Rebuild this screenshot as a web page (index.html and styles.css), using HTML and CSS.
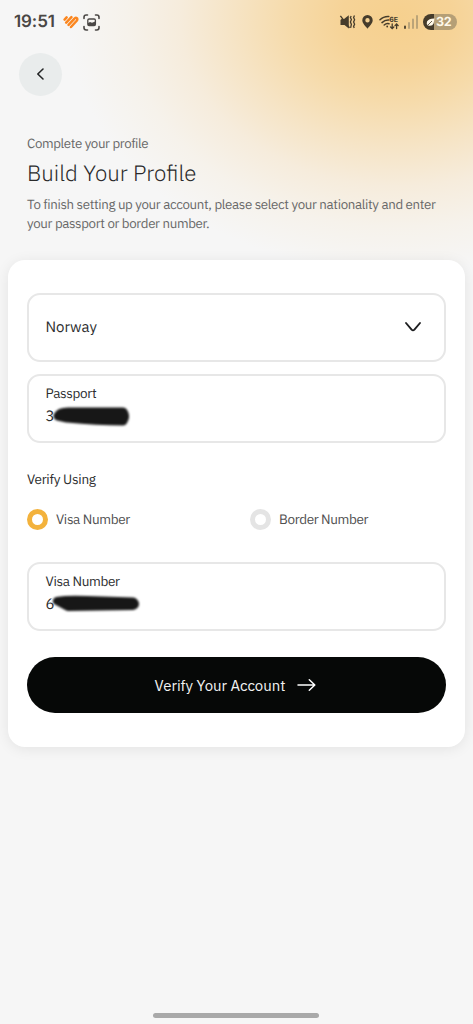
FILE: index.html
```html
<!DOCTYPE html>
<html lang="en">
<head>
<meta charset="utf-8">
<meta name="viewport" content="width=device-width, initial-scale=1">
<title>Build Your Profile</title>
<link rel="stylesheet" href="styles.css">
</head>
<body>
<div class="screen">
  <header class="status">
    <div class="status-left">
      <span class="clock">19:51</span>
      <svg class="heart" width="16" height="14" viewBox="0 0 16 14" fill="none" stroke="#fb861f" stroke-width="2.5" stroke-linecap="round">
        <path d="M1.6 4.6 3.6 2.4M3.2 7.6 8.4 2.2M5.6 9.9 11 4.2C12.7 1.4 15.6 3.4 13.7 5.8L8 12"/>
      </svg>
      <svg class="capture" width="17" height="17" viewBox="0 0 17 17" fill="none" stroke="#4a4745" stroke-width="1.6" stroke-linecap="round">
        <path d="M1 4.5V3.2Q1 1 3.2 1H4.5M12.5 1H13.8Q16 1 16 3.2V4.5M16 12.5V13.8Q16 16 13.8 16H12.5M4.5 16H3.2Q1 16 1 13.8V12.5"/>
        <rect x="4.8" y="5" width="7.6" height="6.6" rx="1.3" stroke-width="1.3"/>
        <path d="M5 9 7 8 9 8.8 12.2 7.6V11.5H5Z" fill="#4a4745" stroke="none"/>
      </svg>
    </div>
    <div class="status-right">
      <svg width="17" height="16" viewBox="0 0 17 16" fill="#463c2b">
        <path d="M2.5 5H5L9.8 1.2V14.5L5.5 11H1.5V6Z"/>
        <path d="M1.4 1.8 10.5 13.8" stroke="#463c2b" stroke-width="1.4"/>
        <path d="M12.2 2 11.4 3.5 12.4 5.5 11.4 8 12.4 10.4 11.6 13.8M15.5 1.5 14.6 3.5 15.6 5.7 14.6 8 15.6 10.3 14.6 12.4 15.2 14" fill="none" stroke="#463c2b" stroke-width="1.3"/>
      </svg>
      <svg class="pin" width="11" height="14" viewBox="0 0 11 14" fill="#463c2b">
        <path fill-rule="evenodd" d="M5.5 0A5.2 5.2 0 0 0 .3 5.2C.3 8.7 4 11.3 5.5 13.7 7 11.3 10.7 8.7 10.7 5.2A5.2 5.2 0 0 0 5.5 0ZM5.5 3A2.2 2.2 0 1 1 5.5 7.4 2.2 2.2 0 0 1 5.5 3Z"/>
      </svg>
      <svg class="wifi" width="21" height="15" viewBox="0 0 21 15" fill="none" stroke="#463c2b" stroke-width="1.5" stroke-linecap="round">
        <path d="M1 4.8Q4.5 1.2 9.8 1.5M3 7.6Q6 4.7 9.8 5M5.2 10Q7.4 8 10 8.7"/>
        <circle cx="8.2" cy="11.5" r=".9" fill="#463c2b" stroke="none"/>
        <path d="M13.2 9V13.3M11.6 12 13.2 13.6 14.8 12M17.6 13.5V9.2M16 10.6 17.6 9 19.2 10.6" stroke-width="1.3"/>
        <text class="wifi-text" x="10.3" y="6.7">6E</text>
      </svg>
      <svg class="signal" width="14" height="14" viewBox="0 0 14 14" stroke="#b59f76" stroke-width="1.8" stroke-linecap="round">
        <path d="M1 11.5V13" stroke="#463c2b"/>
        <path d="M5 8V13M9 4.5V13M13 1V13"/>
      </svg>
      <div class="battery">
        <svg width="9" height="9" viewBox="0 0 9 9" fill="#fff8e8"><path d="M8.5 .5Q3 .3 1 3.5 0 6 2 7.6 6.5 8.7 7.7 5.2ZM0 8.6 2.7 6.3"/><path d="M2 7 6 3" stroke="#463c2b" stroke-width=".8"/></svg>
        <span>32</span>
      </div>
    </div>
  </header>

  <button class="back" aria-label="Back">
    <svg width="9" height="14" viewBox="0 0 9 14" fill="none" stroke="#242526" stroke-width="1.6" stroke-linecap="round" stroke-linejoin="round"><path d="M7 2 1.8 7 7 12"/></svg>
  </button>

  <section class="intro">
    <p class="eyebrow">Complete your profile</p>
    <h1>Build Your Profile</h1>
    <p class="lead"><span>To finish setting up your account, please select your nationality and enter</span><br><span>your passport or border number.</span></p>
  </section>

  <main class="card">
    <div class="field select">
      <span class="country">Norway</span>
      <svg width="18" height="12" viewBox="0 0 18 12" fill="none" stroke="#1d1e20" stroke-width="1.9" stroke-linecap="round" stroke-linejoin="round"><path d="M2 2 7.6 8.6Q9 10 10.4 8.6L16 2"/></svg>
    </div>
    <div class="field passport">
      <span class="label">Passport</span>
      <div class="value"><span>3</span>
        <svg class="mask" width="92" height="30" viewBox="0 0 92 30"><path d="M16 15 Q18 11 26 11L81 11Q84 15 81 20Q55 20 25 17Z" fill="#171717" stroke="#171717" stroke-width="9" stroke-linejoin="round"/></svg>
      </div>
    </div>
    <h2>Verify Using</h2>
    <div class="options">
      <div class="option"><span class="radio on"></span><span>Visa Number</span></div>
      <div class="option"><span class="radio"></span><span>Border Number</span></div>
    </div>
    <div class="field visa">
      <span class="label">Visa Number</span>
      <div class="value"><span>6</span>
        <svg class="mask" width="104" height="30" viewBox="0 0 104 30"><path d="M15 12 Q26 10 45 11L91 12.5Q95 15 91 17L26 18Z" fill="#171717" stroke="#171717" stroke-width="8" stroke-linejoin="round"/></svg>
      </div>
    </div>
    <button class="submit">
      <span>Verify Your Account</span>
      <svg width="19" height="14" viewBox="0 0 19 14" fill="none" stroke="#fff" stroke-width="1.5" stroke-linecap="round" stroke-linejoin="round"><path d="M1 7H17.5M12.3 1.8 17.8 7 12.3 12.2"/></svg>
    </button>
  </main>
  <div class="home"></div>
</div>
</body>
</html>
```

FILE: styles.css
```css
* { box-sizing: border-box; }
body {
  margin: 0;
  font-family: "IBM Plex Sans", Roboto, "Noto Sans", sans-serif;
  text-rendering: geometricPrecision;
  color: #2d2e2f;
  background: #f6f6f6;
}
h1, h2, p { margin: 0; font-weight: 400; }
button { border: 0; padding: 0; font: inherit; }
svg { display: block; flex: none; }
span { white-space: nowrap; }

.screen {
  height: 1024px;
  display: flex;
  flex-direction: column;
  overflow: hidden;
  background:
    radial-gradient(ellipse 330px 255px at 398px 18px,
      #f6d08e 0%, #f6d397 17%, #f6dbab 33%, #f6e4c5 50%, #f6ecdc 66%, #f6f2eb 82%, #f6f6f6 100%),
    #f6f6f6;
}

.status {
  height: 44px;
  padding: 0 16px 0 14px;
  display: flex;
  align-items: center;
  justify-content: space-between;
}
.status-left, .status-right { display: flex; align-items: center; }
.clock {
  width: 42px;
  font: 600 17px/20px Inter, sans-serif;
  letter-spacing: -.1px;
  color: #4a4745;
}
.heart { margin-left: 7px; }
.capture { margin-left: 4px; }
.pin { margin-left: 6px; }
.wifi { margin-left: 6px; }
.signal { margin-left: 4px; }
.wifi-text { font: 700 7px Inter, sans-serif; fill: #463c2b; stroke: none; }
.battery {
  width: 34px;
  height: 16px;
  margin-left: 5px;
  padding-left: 3px;
  display: flex;
  align-items: center;
  gap: 1px;
  border-radius: 8px;
  background: linear-gradient(90deg, #463c2b 11px, #b59f76 11px);
  color: #fff8e8;
  font: 700 12.5px/17px Inter, sans-serif;
  letter-spacing: -.4px;
}

.back {
  width: 43px;
  height: 43px;
  margin: 8.5px 0 0 19px;
  display: grid;
  place-items: center;
  border-radius: 50%;
  background: #e9ecec;
}

.intro { padding: 37px 27px 0; height: 164px; color: #686868; }
.eyebrow { font-size: 13.3px; line-height: 20px; letter-spacing: -.37px; }
h1 {
  margin-top: 6px;
  font-size: 22.3px;
  line-height: 30px;
  font-weight: 300;
  color: #292a2b;
}
.lead { margin-top: 6px; font-size: 13.3px; line-height: 19px; letter-spacing: -.34px; }

.card {
  height: 487px;
  margin: 0 8px;
  padding: 33px 19px 0;
  border-radius: 17px;
  background: #fff;
  box-shadow: 0 2px 14px rgba(0, 0, 0, .08);
}
.field {
  height: 69px;
  border: 2px solid #e7e7e7;
  border-radius: 13px;
  padding: 0 16.5px;
}
.select {
  display: flex;
  align-items: center;
  justify-content: space-between;
  padding-right: 22px;
  font-size: 15px;
}
.passport { margin-top: 12.5px; padding-top: 8px; }
.label { display: block; font-size: 13.5px; line-height: 18px; letter-spacing: -.33px; }
.value { position: relative; margin-top: 5px; font-size: 15px; line-height: 20px; }
.mask { position: absolute; left: -4px; top: -6px; filter: blur(1.3px); }
h2 { margin-top: 26px; font-size: 13.5px; line-height: 20px; letter-spacing: -.27px; }
.options { margin-top: 19px; display: grid; grid-template-columns: 223px 1fr; }
.option { display: flex; align-items: center; gap: 8px; height: 22px; font-size: 13.5px; letter-spacing: -.36px; color: #505050; }
.radio { width: 21px; height: 21px; border: 5px solid #e4e4e4; border-radius: 50%; background: #fff; }
.radio.on { border-color: #f3b23c; }
.visa { margin-top: 31.5px; padding-top: 8px; }
.submit {
  width: 100%;
  height: 56px;
  margin-top: 26.5px;
  padding-right: 2px;
  display: flex;
  align-items: center;
  justify-content: center;
  gap: 12px;
  border-radius: 28px;
  background: #060807;
  color: #f2f2f2;
  font-size: 15px;
  letter-spacing: -.04px;
}
.home {
  width: 166px;
  height: 5px;
  margin: auto auto 6px 153px;
  border-radius: 3px;
  background: #a9a9a9;
}
```
